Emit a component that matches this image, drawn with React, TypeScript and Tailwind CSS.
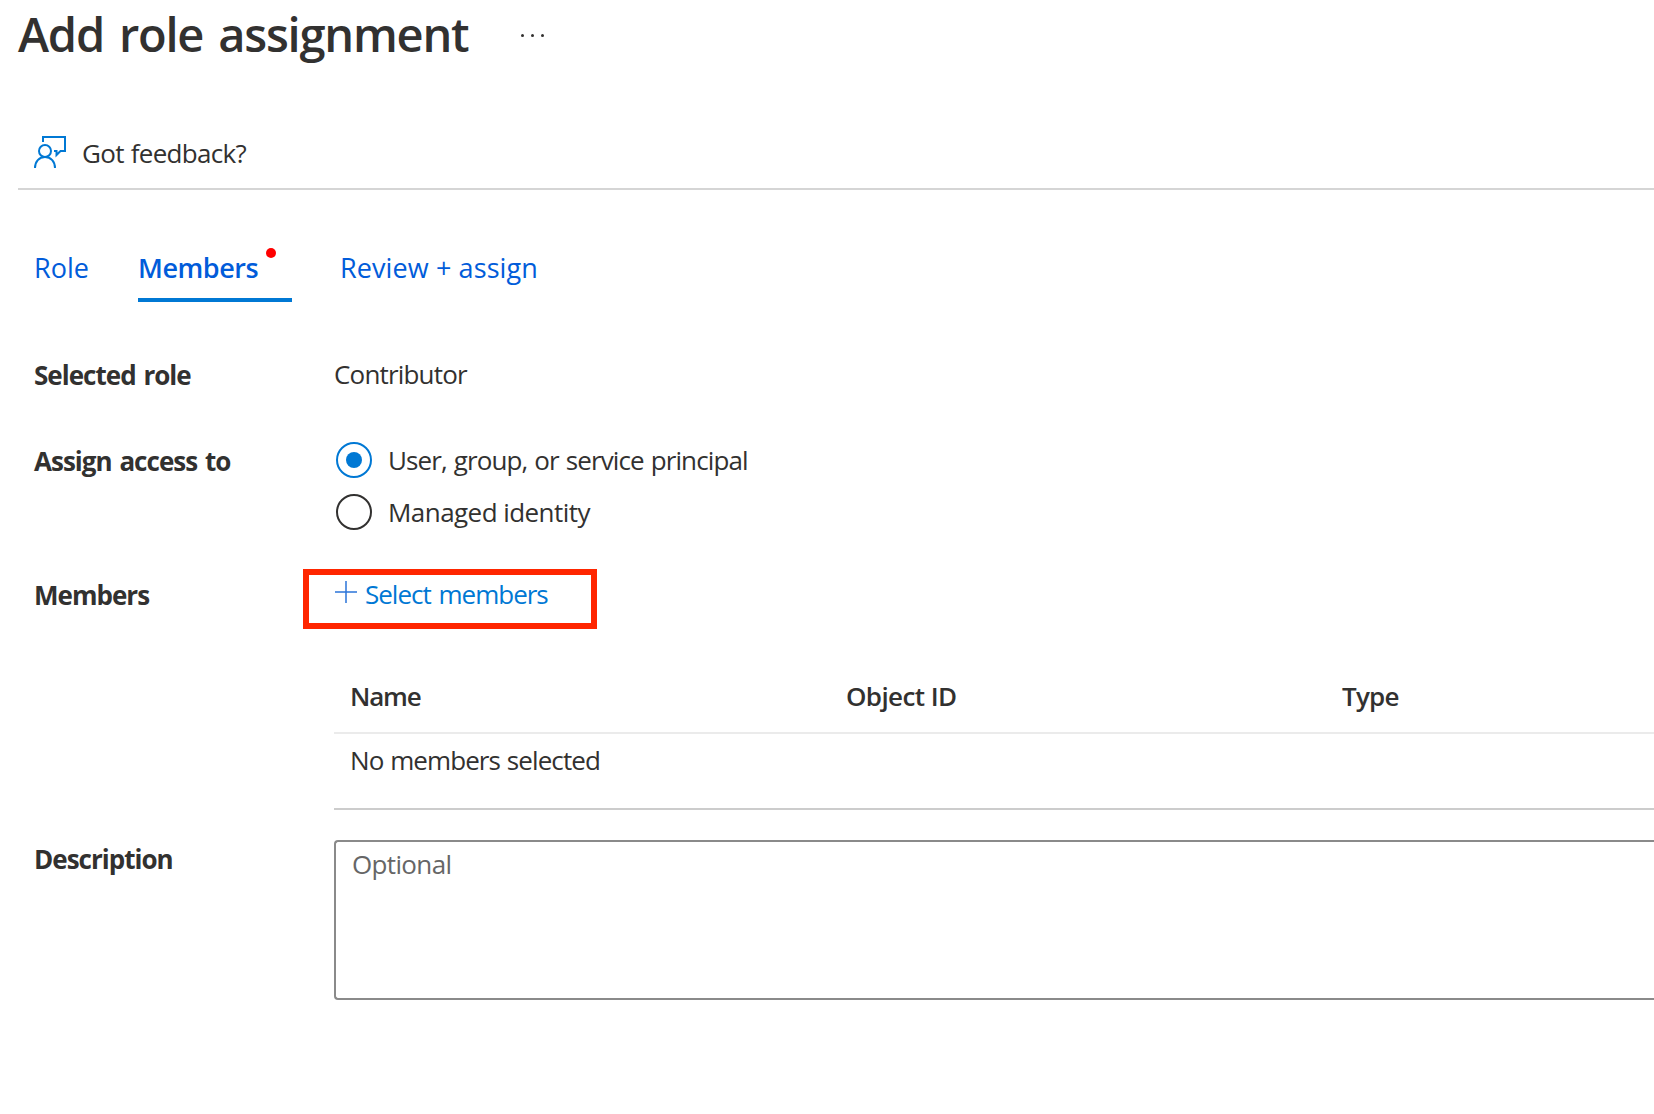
import type { ReactNode } from "react";

function FeedbackIcon() {
  return (
    <svg className="mt-px block h-8 w-8 shrink-0" viewBox="0 0 32 32" fill="none" stroke="#0078d4" strokeWidth="2">
      <path d="M9 6V1h22v14h-4.500l-4 4v-4h-2.500" />
      <circle cx="11" cy="15" r="6" />
      <path d="M1 32c0-6.500 4-11 10-11s10 4.500 10 11" />
    </svg>
  );
}

function PlusIcon() {
  return (
    <svg className="mt-[5px] block h-[22px] w-[22px] shrink-0" viewBox="0 0 22 22" stroke="#2b74d9" strokeWidth="1.500">
      <path d="M11 0v22M0 11h22" />
    </svg>
  );
}

function Radio({ checked, children }: { checked?: boolean; children: ReactNode }) {
  return (
    <label className="flex h-9 items-center">
      <span
        className={
          checked
            ? "ml-0.5 flex h-9 w-9 items-center justify-center rounded-full border-2 border-[#0078d4]"
            : "ml-0.5 flex h-9 w-9 items-center justify-center rounded-full border-2 border-[#323130]"
        }
      >
        {checked && <span className="h-4 w-4 rounded-full bg-[#0078d4]" />}
      </span>
      <span className="ml-4">{children}</span>
    </label>
  );
}

function Label({ children }: { children: ReactNode }) {
  return (
    <div className="w-[300px] shrink-0 pt-px font-bold tracking-[-0.98px] [word-spacing:2px]">{children}</div>
  );
}

export default function App() {
  return (
    <div className="h-[1114px] w-full overflow-hidden bg-white font-['Open_Sans',sans-serif] text-[26px] leading-9 whitespace-nowrap text-[#323130]">
      <header className="flex h-[66px] pl-[18px]">
        <h1 className="text-[47px] leading-[69px] font-semibold tracking-[-1.22px] [word-spacing:4px]">
          Add role assignment
        </h1>
        <div className="mt-[34px] ml-[53px] flex h-[3px] gap-[7px]">
          <span className="h-[3px] w-[3px] rounded-full bg-[#323130]" />
          <span className="h-[3px] w-[3px] rounded-full bg-[#323130]" />
          <span className="h-[3px] w-[3px] rounded-full bg-[#323130]" />
        </div>
      </header>

      <div className="mt-[69px] ml-[18px] flex h-[55px] border-b-2 border-[#d5d5d5] pl-4">
        <FeedbackIcon />
        <span className="ml-4 tracking-[-0.7px] [word-spacing:1px]">Got feedback?</span>
      </div>

      <nav className="mt-[57px] flex h-[55px] pl-[34px] text-[27px] leading-[41px] text-[#015cda]">
        <span className="w-[104px]">Role</span>
        <span className="relative w-[154px] border-b-4 border-[#0078d4] font-semibold tracking-[-0.45px]">
          Members
          <span className="absolute top-px left-32 h-2.5 w-2.5 rounded-full bg-[#ff0000]" />
        </span>
        <span className="ml-12 tracking-[0.1px]">Review + assign</span>
      </nav>

      <main className="pl-[34px]">
        <section className="mt-[54px] flex h-9">
          <Label>Selected role</Label>
          <span className="tracking-[-0.82px]">Contributor</span>
        </section>

        <section className="mt-[50px] flex h-[88px]">
          <Label>Assign access to</Label>
          <div className="flex flex-col gap-4">
            <Radio checked>
              <span className="tracking-[-0.88px] [word-spacing:1px]">User, group, or service principal</span>
            </Radio>
            <Radio>
              <span className="tracking-[-0.55px]">Managed identity</span>
            </Radio>
          </div>
        </section>

        <section className="mt-[46px] flex h-9">
          <Label>Members</Label>
          <div className="relative flex pl-px text-[#0078d4]">
            <PlusIcon />
            <span className="ml-2 tracking-[-1px] [word-spacing:2px]">Select members</span>
            <span className="absolute -top-[7px] -left-[31px] h-[60px] w-[294px] border-[6px] border-[#ff2600]" />
          </div>
        </section>

        <section className="mt-[66px] ml-[300px]">
          <div className="flex h-14 border-b-2 border-[#ebebeb] pl-4 font-semibold">
            <span className="w-[496px] tracking-[-1.2px]">Name</span>
            <span className="w-[496px] tracking-[-0.6px]">Object ID</span>
            <span className="tracking-[-0.8px]">Type</span>
          </div>
          <div className="h-[76px] border-b-2 border-[#cccccc] pt-2 pl-4 tracking-[-0.92px] [word-spacing:1px]">
            No members selected
          </div>
        </section>

        <section className="mt-[30px] flex">
          <Label>Description</Label>
          <div className="h-40 flex-1 rounded-l border-2 border-r-0 border-[#8a8a8a] pt-1 pl-4 tracking-[-0.65px] text-[#666666]">
            Optional
          </div>
        </section>
      </main>
    </div>
  );
}
